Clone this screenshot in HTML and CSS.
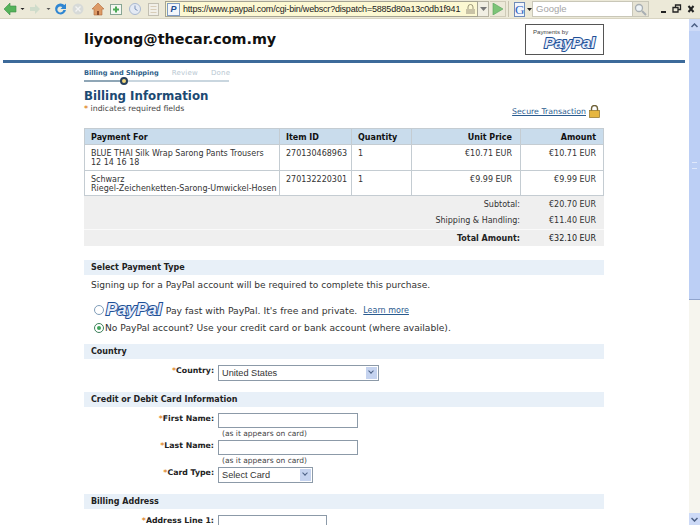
FILE: index.html
```html
<!DOCTYPE html>
<html lang="en">
<head>
    <meta charset="UTF-8">
    <meta name="viewport" content="width=device-width, initial-scale=1.0">
    <title>PayPal - Billing Information</title>
    <link rel="stylesheet" href="styles.css">
</head>
<body>
    <div class="toolbar">
        <svg class="nav-icons" width="162" height="18" viewBox="0 0 162 18">
            <path d="M4 9l6-6v3h6v6h-6v3z" fill="#55b35a" stroke="#3c8f48" stroke-width=".6"/>
            <path d="M20.500 8l2 2 2-2z" fill="#222"/>
            <path d="M40 9l-5-5v3h-5v4h5v3z" fill="#cfdccb"/>
            <path d="M46.500 8l2 2 2-2z" fill="#555"/>
            <path d="M66 10a5.500 5.500 0 11-1.500-5l1.500-1.500v5.500h-5.500l1.800-1.800a3 3 0 101 2.800z" fill="#2f86d2"/>
            <circle cx="78" cy="9" r="5.500" fill="#d7dad8"/>
            <path d="M75.500 6.500l5 5m0-5l-5 5" stroke="#f3f3f3" stroke-width="1.300"/>
            <path d="M92 9l6-6 6 6h-2v6h-8V9z" fill="#dd9a66" stroke="#b0683a" stroke-width=".6"/>
            <rect x="97" y="11" width="2" height="4" fill="#8a4b2a"/>
            <rect x="110.500" y="4.500" width="11" height="10" fill="#f4f7f2" stroke="#87a593"/>
            <path d="M113 9.500h6m-3-3v6" stroke="#4aaa55" stroke-width="2"/>
            <circle cx="135" cy="9" r="5.500" fill="#e4eaf4" stroke="#a9b8d0"/>
            <path d="M135 5.500V9l2.500 1.500" stroke="#7d93b8" fill="none"/>
            <rect x="148.500" y="3.500" width="10" height="12" fill="#f1efe8" stroke="#c2bfb2"/>
            <path d="M150.500 6.500h6m-6 3h6m-6 3h6" stroke="#d8cdb8"/>
        </svg>
        <div class="address-bar">
            <span class="site-icon">P</span>
            <span class="address-url">https://www.paypal.com/cgi-bin/webscr?dispatch=5885d80a13c0db1f941</span>
            <svg width="11" height="12" viewBox="0 0 11 12"><path d="M3 6V4a2.500 2.500 0 015 0v2" fill="none" stroke="#9b9678"/><rect x="1" y="6" width="9" height="5" fill="#c9c3a6"/></svg>
        </div>
        <span class="drop-btn"><svg width="7" height="4" viewBox="0 0 7 4"><path d="M0 0h7L3.500 4z" fill="#777"/></svg></span>
        <span class="go-btn"><svg width="11" height="12" viewBox="0 0 11 12"><path d="M1 0l10 6-10 6z" fill="#7cc477" stroke="#58a35c" stroke-width=".6"/></svg></span>
        <span class="toolbar-sep"></span>
        <span class="google-btn">G</span>
        <svg class="google-drop" width="5" height="3" viewBox="0 0 5 3"><path d="M0 0h5L2.500 3z" fill="#222"/></svg>
        <div class="search-box">Google</div>
        <span class="search-btn"><svg width="13" height="13" viewBox="0 0 13 13"><circle cx="5" cy="5" r="3.500" fill="#eef3f6" stroke="#a8aeb2" stroke-width="1.300"/><path d="M8 8l4 4" stroke="#a8aeb2" stroke-width="2"/></svg></span>
        <div class="win-controls">
            <svg width="40" height="12" viewBox="0 0 40 12">
                <path d="M6 9h5" stroke="#222" stroke-width="2"/>
                <path d="M18 4.500h5v4.500h-5z M20.500 4.500V2h5v4.500h-2.500" fill="none" stroke="#222" stroke-width="1.300"/>
                <path d="M33.500 3l5 6m0-6l-5 6" stroke="#222" stroke-width="2"/>
            </svg>
        </div>
    </div>

    <div class="viewport">
        <div class="page">
            <div class="merchant-head">
                <div class="merchant-name">liyoong@thecar.com.my</div>
                <div class="paypal-badge">
                    <span class="badge-label">Payments by</span>
                    <span class="paypal-logo">PayPal</span>
                </div>
            </div>
            <div class="head-rule"></div>

            <div class="content">
                <div class="steps">
                    <div class="step-labels">
                        <span class="step-current">Billing and Shipping</span>
                        <span class="step-next">Review</span>
                        <span class="step-next">Done</span>
                    </div>
                    <div class="step-track"><span class="step-dot"></span></div>
                </div>

                <div class="title-row">
                    <div>
                        <h1>Billing Information</h1>
                        <p class="required-note"><span class="star">*</span> indicates required fields</p>
                    </div>
                    <div class="secure">
                        <a href="#">Secure Transaction</a>
                        <svg width="11" height="13" viewBox="0 0 11 13"><path d="M2.500 6V3.500a3 3 0 016 0V6" fill="none" stroke="#6f6238" stroke-width="1.400"/><rect x=".5" y="5.500" width="10" height="7" fill="#e6b640" stroke="#8d7026" stroke-width=".7"/></svg>
                    </div>
                </div>

                <table class="cart">
                    <thead>
                        <tr>
                            <th class="col-item">Payment For</th>
                            <th class="col-id">Item ID</th>
                            <th class="col-qty">Quantity</th>
                            <th class="col-price num">Unit Price</th>
                            <th class="col-amount num">Amount</th>
                        </tr>
                    </thead>
                    <tbody>
                        <tr>
                            <td>BLUE THAI Silk Wrap Sarong Pants Trousers<br>12 14 16 18</td>
                            <td>270130468963</td>
                            <td>1</td>
                            <td class="num">€10.71 EUR</td>
                            <td class="num">€10.71 EUR</td>
                        </tr>
                        <tr>
                            <td>Schwarz<br>Riegel-Zeichenketten-Sarong-Umwickel-Hosen</td>
                            <td>270132220301</td>
                            <td>1</td>
                            <td class="num">€9.99 EUR</td>
                            <td class="num">€9.99 EUR</td>
                        </tr>
                    </tbody>
                </table>

                <div class="totals">
                    <div class="total-row"><span>Subtotal:</span><span class="total-val">€20.70 EUR</span></div>
                    <div class="total-row"><span>Shipping &amp; Handling:</span><span class="total-val">€11.40 EUR</span></div>
                    <div class="total-row grand"><b>Total Amount:</b><span class="total-val">€32.10 EUR</span></div>
                </div>

                <h2 class="section first">Select Payment Type</h2>
                <p class="signup-note">Signing up for a PayPal account will be required to complete this purchase.</p>
                <div class="pay-option">
                    <span class="radio"></span>
                    <span class="paypal-logo big">PayPal</span>
                    <span class="pay-text">Pay fast with PayPal. It's free and private.</span>
                    <a href="#" class="learn">Learn more</a>
                </div>
                <div class="pay-option second">
                    <span class="radio checked"></span>
                    <span>No PayPal account? Use your credit card or bank account (where available).</span>
                </div>

                <h2 class="section">Country</h2>
                <div class="field">
                    <label><span class="star">*</span>Country:</label>
                    <div class="select wide">United States<span class="select-arrow"></span></div>
                </div>

                <h2 class="section">Credit or Debit Card Information</h2>
                <div class="field">
                    <label><span class="star">*</span>First Name:</label>
                    <div><div class="input"></div><div class="hint">(as it appears on card)</div></div>
                </div>
                <div class="field">
                    <label><span class="star">*</span>Last Name:</label>
                    <div><div class="input"></div><div class="hint">(as it appears on card)</div></div>
                </div>
                <div class="field">
                    <label><span class="star">*</span>Card Type:</label>
                    <div class="select narrow">Select Card<span class="select-arrow"></span></div>
                </div>

                <h2 class="section">Billing Address</h2>
                <div class="field">
                    <label><span class="star">*</span>Address Line 1:</label>
                    <div class="input short"></div>
                </div>
            </div>
        </div>

        <div class="scrollbar">
            <span class="scroll-btn"><svg width="7" height="5" viewBox="0 0 7 5"><path d="M.5 4l3-3 3 3" fill="none" stroke="#4d6185" stroke-width="1.500"/></svg></span>
            <span class="scroll-thumb"></span>
            <span class="scroll-track"></span>
            <span class="scroll-btn"><svg width="7" height="5" viewBox="0 0 7 5"><path d="M.5 1l3 3 3-3" fill="none" stroke="#4d6185" stroke-width="1.500"/></svg></span>
        </div>
    </div>
</body>
</html>
```

FILE: styles.css
```css
html, body {
    margin: 0;
    padding: 0;
    height: 525px;
    overflow: hidden;
}

body {
    font-family: "DejaVu Sans", Verdana, sans-serif;
    font-size: 8px;
    color: #333;
    background: #fff;
}

/* browser chrome */
.toolbar {
    height: 19px;
    box-sizing: border-box;
    background: #ece9d8;
    display: flex;
    align-items: center;
    border-bottom: 1px solid #d8d4c2;
}

.nav-icons {
    flex: none;
    margin-right: 3px;
}

.address-bar {
    width: 313px;
    height: 16px;
    flex: none;
    background: #fcf8d2;
    border: 1px solid #a6a493;
    display: flex;
    align-items: center;
    gap: 3px;
    padding: 0 1px;
    box-sizing: border-box;
    font-family: "Liberation Sans", Arial, sans-serif;
    font-size: 9px;
    letter-spacing: -.2px;
    color: #222;
    white-space: nowrap;
}

.address-url {
    flex: 1;
    min-width: 0;
}

.site-icon {
    width: 11px;
    height: 11px;
    border: 1px solid #7f9cc4;
    background: #f3f6fb;
    color: #1c4d92;
    font-size: 9px;
    font-style: italic;
    font-weight: bold;
    line-height: 11px;
    text-align: center;
    flex: none;
}

.drop-btn {
    width: 11px;
    height: 16px;
    background: #f1efe3;
    border: 1px solid #b6b3a2;
    border-left: 0;
    box-sizing: border-box;
    display: flex;
    align-items: center;
    justify-content: center;
}

.go-btn {
    width: 16px;
    height: 16px;
    margin-left: 1px;
    border: 1px solid #cfcbb8;
    border-left: 0;
    box-sizing: border-box;
    display: flex;
    align-items: center;
    justify-content: center;
}

.toolbar-sep {
    width: 1px;
    height: 16px;
    background: #c6c2ae;
    margin: 0 5px 0 2px;
}

.google-btn {
    width: 9px;
    height: 13px;
    border: 1px solid #6f8bb8;
    background: #f2f5fb;
    color: #2a62c0;
    font-family: "Liberation Serif", serif;
    font-size: 13px;
    line-height: 13px;
    text-align: center;
}

.google-drop {
    margin-left: 2px;
}

.search-box {
    width: 100px;
    height: 16px;
    background: #fff;
    border: 1px solid #c9c7b8;
    border-right: 0;
    box-sizing: border-box;
    padding-left: 3px;
    font-family: "Liberation Sans", Arial, sans-serif;
    font-size: 9.500px;
    line-height: 14px;
    color: #a5a5a5;
}

.search-btn {
    width: 17px;
    height: 16px;
    background: #e6e3d4;
    border: 1px solid #c9c7b8;
    box-sizing: border-box;
    display: flex;
    align-items: center;
    justify-content: center;
}

.win-controls {
    margin-left: auto;
    margin-right: 5px;
    display: flex;
}

/* page */
.viewport {
    display: flex;
    height: 506px;
}

.page {
    width: 689px;
    flex: none;
    overflow: hidden;
}

.merchant-head {
    height: 41px;
    box-sizing: border-box;
    padding: 5px 85px 0 84px;
    display: flex;
    justify-content: space-between;
}

.merchant-name {
    font-size: 14.350px;
    font-weight: bold;
    color: #111;
    margin-top: 7px;
}

.paypal-badge {
    width: 79px;
    height: 31px;
    border: 1px solid #555;
    box-sizing: border-box;
    padding: 3px 0 0 7px;
    display: flex;
    flex-direction: column;
}

.badge-label {
    font-size: 6.100px;
    font-family: "Liberation Sans", Arial, sans-serif;
    color: #444;
}

.paypal-logo {
    font-family: "Liberation Sans", Arial, sans-serif;
    font-size: 15.500px;
    font-weight: bold;
    font-style: italic;
    color: #e9eefb;
    -webkit-text-stroke: 2px #1d4f96;
    paint-order: stroke fill;
    text-align: right;
    padding-right: 8px;
    line-height: 16px;
}

.paypal-logo.big {
    font-size: 17px;
    line-height: 18px;
    padding: 0;
    margin: 0 3px 0 1px;
}

.head-rule {
    height: 3px;
    background: #3c6a9a;
    margin: 0 4px 0 3px;
}

.content {
    padding: 0 85px 0 84px;
}

.steps {
    width: 145px;
    margin-top: 5px;
}

.step-labels {
    display: flex;
    gap: 13px;
    font-size: 7px;
    line-height: 10px;
    white-space: nowrap;
}

.step-current {
    font-weight: bold;
    font-size: 6.600px;
    color: #2f5f8a;
}

.step-next {
    color: #b9c8d2;
    letter-spacing: .2px;
}

.step-track {
    height: 2px;
    margin-top: 2px;
    background: linear-gradient(to right, #8fa6b6 40px, #c9d6df 40px);
    position: relative;
}

.step-dot {
    position: absolute;
    left: 36px;
    top: -3px;
    width: 4px;
    height: 4px;
    border: 2px solid #27405c;
    border-radius: 50%;
    background: #f3d77c;
}

.title-row {
    display: flex;
    justify-content: space-between;
    align-items: flex-end;
    margin-top: 6px;
    height: 26px;
}

h1 {
    margin: 0;
    font-size: 11.800px;
    line-height: 16px;
    font-weight: bold;
    color: #1c4a73;
}

.required-note {
    margin: 0;
    font-size: 7.800px;
    line-height: 10px;
    color: #444;
}

.star {
    color: #e08a2c;
    font-weight: bold;
}

.secure {
    display: flex;
    align-items: center;
    gap: 3px;
    margin-right: 4px;
    margin-bottom: -4px;
}

.secure a {
    font-size: 7.800px;
    color: #2a5b8f;
    line-height: 11px;
}

.cart {
    width: 519px;
    margin-top: 14px;
    border-collapse: collapse;
    table-layout: fixed;
}

.cart th, .cart td {
    box-sizing: border-box;
    border: 1px solid #c4ccd2;
    padding: 4px 8px 0 6px;
    line-height: 9px;
    text-align: left;
    vertical-align: top;
    font-size: 8px;
}

.cart th {
    background: #c9dcec;
    color: #111;
    height: 16px;
}

.cart td {
    height: 25.500px;
}

.cart td:first-child {
    padding-right: 2px;
}

.cart .col-amount, .cart td:last-child {
    padding-right: 7px;
}

.cart .num {
    text-align: right;
}

.col-item { width: 195px; }
.col-id { width: 72px; }
.col-qty { width: 60px; }
.col-price { width: 109px; }
.col-amount { width: 83px; }

.totals {
    background: #efefef;
}

.total-row {
    display: flex;
    justify-content: flex-end;
    align-items: center;
    height: 17px;
    font-size: 8px;
}

.total-row:first-child {
    height: 16px;
}

.total-row.grand {
    box-sizing: border-box;
    border-top: 1px solid #fafafa;
    color: #222;
}

.total-val {
    width: 84px;
    padding-right: 8px;
    text-align: right;
    box-sizing: border-box;
}

h2.section {
    margin: 11px 0 0;
    background: #e8f0f8;
    height: 15px;
    line-height: 15px;
    padding-left: 7px;
    font-size: 8px;
    font-weight: bold;
    color: #222;
}

h2.first {
    margin-top: 14px;
}

.signup-note {
    margin: 5px 0 0 7px;
    font-size: 9.050px;
    line-height: 11px;
}

.pay-option {
    display: flex;
    align-items: center;
    gap: 1px;
    margin: 10px 0 0 10px;
    height: 18px;
    font-size: 9.150px;
}

.pay-text {
    font-size: 9.250px;
}

.pay-option.second {
    margin-top: 3px;
    margin-bottom: -1px;
    height: 12px;
}

.learn {
    color: #2a5b8f;
    font-size: 8px;
    margin-left: 5px;
}

.radio {
    width: 8px;
    height: 8px;
    border: 1px solid #7f9db9;
    border-radius: 50%;
    background: #fff;
    position: relative;
    flex: none;
}

.radio.checked {
    border-color: #3c7f5a;
}

.radio.checked::after {
    content: "";
    position: absolute;
    left: 2px;
    top: 2px;
    width: 4px;
    height: 4px;
    border-radius: 50%;
    background: #3fa45a;
}

.field {
    display: flex;
    margin-top: 2px;
}

h2 + .field {
    margin-top: 6px;
}

.field label {
    width: 134px;
    padding-right: 4px;
    box-sizing: border-box;
    text-align: right;
    font-weight: bold;
    font-size: 7.800px;
    line-height: 11px;
    color: #222;
}

.input {
    width: 140px;
    height: 15px;
    border: 1px solid #8c9aa8;
    box-sizing: border-box;
    background: #fff;
}

.input.short {
    width: 109px;
}

.hint {
    margin: 1px 0 0 4px;
    font-size: 7.500px;
    line-height: 9px;
    color: #444;
}

.select {
    height: 16px;
    border: 1px solid #8c9aa8;
    box-sizing: border-box;
    font-family: "Liberation Sans", Arial, sans-serif;
    font-size: 9.200px;
    line-height: 15px;
    color: #333;
    padding-left: 3px;
    display: flex;
    justify-content: space-between;
    background: #fff;
}

.select.wide { width: 161px; }
.select.narrow { width: 95px; }

.select-arrow {
    width: 11px;
    height: 12px;
    margin: 1px 1px 0 0;
    background: #c5d3ef;
    position: relative;
}

.select-arrow::after {
    content: "";
    position: absolute;
    left: 3px;
    top: 2px;
    width: 3px;
    height: 3px;
    border-right: 1.500px solid #4d6185;
    border-bottom: 1.500px solid #4d6185;
    transform: rotate(45deg);
}

/* scrollbar */
.scrollbar {
    width: 11px;
    flex: none;
    background: #f6f5ee;
    display: flex;
    flex-direction: column;
}

.scroll-btn {
    height: 12px;
    background: #cddaf7;
    display: flex;
    align-items: center;
    justify-content: center;
    flex: none;
}

.scroll-thumb {
    height: 269px;
    background: #bccff5;
    border-bottom: 1px solid #90a4cc;
    flex: none;
    box-sizing: border-box;
    display: flex;
    align-items: center;
    justify-content: center;
}

.scroll-thumb::after {
    content: "";
    width: 5px;
    height: 5px;
    border-top: 1px solid #dfe8fb;
    border-bottom: 1px solid #dfe8fb;
}

.scroll-track {
    flex: 1;
}
```
